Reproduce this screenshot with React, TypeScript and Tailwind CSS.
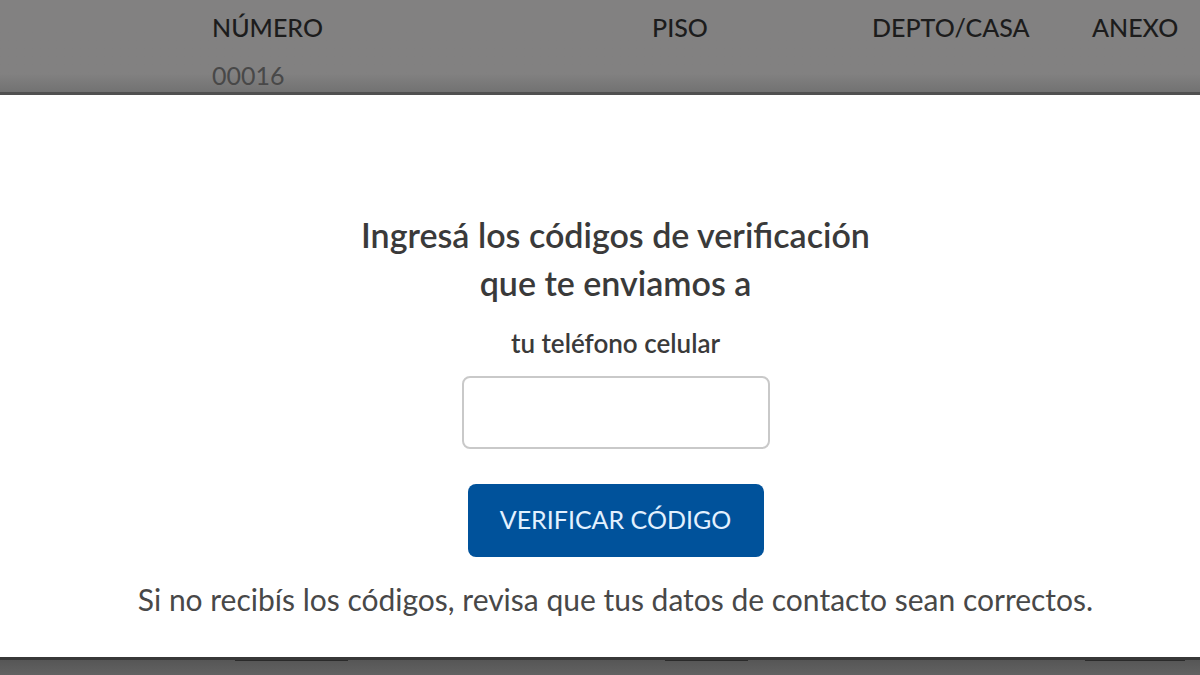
const addressFields = [
  { label: "NÚMERO", value: "00016" },
  { label: "PISO", value: "" },
  { label: "DEPTO/CASA", value: "" },
  { label: "ANEXO", value: "" },
];

function AddressHeader() {
  return (
    <header className="h-[95px] overflow-hidden border-b-3 border-[#505050] bg-linear-to-b from-[#828181] from-80% to-[#727272] pt-[9px] pl-[212px]">
      <dl className="grid grid-cols-[440fr_220fr_220fr_108fr]">
        {addressFields.map((field) => (
          <div key={field.label} className="flex min-w-0 flex-col gap-3 whitespace-nowrap text-[25px] leading-[36px]">
            <dt className="font-medium text-[#1c1c1c]">{field.label}</dt>
            <dd className="text-[#484848]">{field.value}</dd>
          </div>
        ))}
      </dl>
    </header>
  );
}

function VerificationDialog() {
  return (
    <section
      role="dialog"
      aria-labelledby="verification-title"
      className="bg-white pt-[116px] pb-[34px] pl-[31px]"
    >
      <form className="flex flex-col items-center text-center" onSubmit={(event) => event.preventDefault()}>
        <h1 id="verification-title" className="text-[34px] leading-[48px] font-semibold text-[#3a3a3a]">
          Ingresá los códigos de verificación
          <br />
          que te enviamos a
        </h1>
        <label htmlFor="phone-code" className="mt-[18px] text-[26px] leading-[36px] font-semibold text-[#3a3a3a]">
          tu teléfono celular
        </label>
        <input
          id="phone-code"
          type="text"
          inputMode="numeric"
          className="mt-[15px] h-[73px] w-[308px] rounded-lg border-2 border-[#c9c9c9] bg-white px-4 text-center text-[26px] text-[#333333] outline-none"
        />
        <button
          type="submit"
          className="mt-[35px] h-[73px] w-[296px] rounded-lg bg-[#00529b] pb-1 text-[25px] leading-[36px] text-[#e3f1ff]"
        >
          VERIFICAR CÓDIGO
        </button>
        <p className="mt-[18px] text-[30px] leading-[48px] text-[#484848]">
          Si no recibís los códigos, revisa que tus datos de contacto sean correctos.
        </p>
      </form>
    </section>
  );
}

function PageFooter() {
  return (
    <footer className="flex-1 border-t-3 border-[#383838] bg-linear-to-b from-[#565656] to-[#626262]">
      <div className="grid grid-cols-[430fr_420fr_115fr] pl-[235px]">
        <span className="h-px w-[113px] bg-[#2a2a2a]" />
        <span className="h-px w-[83px] bg-[#2a2a2a]" />
        <span className="h-px w-[100px] bg-[#2a2a2a]" />
      </div>
    </footer>
  );
}

export default function App() {
  return (
    <main className="flex min-h-screen flex-col bg-[#5c5c5c] font-['Lato','Noto_Sans',sans-serif]">
      <AddressHeader />
      <VerificationDialog />
      <PageFooter />
    </main>
  );
}
